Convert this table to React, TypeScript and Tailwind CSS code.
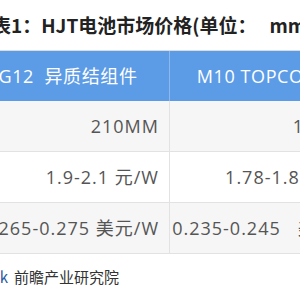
import React from 'react';

const ROWS = [
  { a: '210MM', b: '182MM', bg: 'bg-[#f6f6f6]' },
  { a: '1.9-2.1 元/W', b: '1.78-1.88 元/W', bg: 'bg-white' },
  { a: '0.265-0.275 美元/W', b: '0.235-0.245\u00a0\u00a0 美元/W', bg: 'bg-[#f6f6f6]' },
];

const font = { fontFamily: '"Open Sans", "Noto Sans CJK SC", sans-serif' };

export default function App() {
  return (
    <div className="w-[300px] h-[300px] overflow-hidden bg-white" style={font}>
      {/* title */}
      <div
        className="h-[50px] flex items-center ml-[-8px] whitespace-nowrap text-[19px] font-bold text-[#222]"
        style={{ fontFamily: '"Noto Sans CJK SC", sans-serif' }}
      >
        表1：HJT电池市场价格(单位：&nbsp;&nbsp; mm)
      </div>

      {/* table */}
      <div className="ml-[-33px] w-[406px] border-t border-[#dcdcdc]">
        <div className="flex h-[50px] bg-[#5c9be6] text-white text-[18px] tracking-[0.6px]">
          <div className="w-[202px] flex items-center justify-center whitespace-nowrap">G12 &nbsp;异质结组件</div>
          <div className="w-px bg-[#8cb8ee]" />
          <div className="w-[203px] flex items-center justify-center pl-[14px] whitespace-nowrap">M10 TOPCON 组件</div>
        </div>
        {ROWS.map((r) => (
          <div key={r.a} className={`flex h-[51px] border-b border-[#e2e2e2] text-[18px] tracking-[1px] text-[#555] ${r.bg}`}>
            <div className="w-[202px] flex items-center justify-end pr-[10px] whitespace-nowrap">{r.a}</div>
            <div className="w-px bg-[#e2e2e2]" />
            <div className="w-[203px] flex items-center justify-end pr-[12px] whitespace-nowrap">{r.b}</div>
          </div>
        ))}
      </div>

      {/* source */}
      <div
        className="h-[46px] flex items-center ml-[-49px] whitespace-nowrap text-[15px] text-[#333]"
        style={{ fontFamily: '"Noto Sans CJK SC", sans-serif' }}
      >
        <span className="text-[#2c5aa0]">InfoLink</span>
        <span className="ml-[6px]">前瞻产业研究院</span>
      </div>
    </div>
  );
}
